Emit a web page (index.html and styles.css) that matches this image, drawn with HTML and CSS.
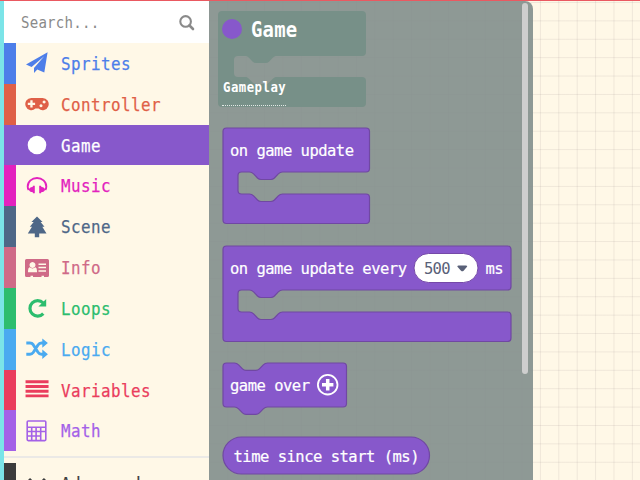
FILE: index.html
```
<!DOCTYPE html>
<html lang="en">
<head>
<meta charset="utf-8">
<title>Blocks editor</title>
<link rel="stylesheet" href="styles.css">
</head>
<body>
<div class="editor">
  <aside class="toolbox">
    <div class="search"><span class="label">Search...</span>
      <svg width="18" height="18" viewBox="0 0 18 18"><circle cx="7.6" cy="7.4" r="5.3" fill="none" stroke="#8a8a8a" stroke-width="2.1"/><path d="M11.5 11.5L15 15" stroke="#8a8a8a" stroke-width="2.6" stroke-linecap="round"/></svg>
    </div>
    <div class="row sprites"><svg viewBox="0 0 24 24"><path d="M22.6 1.200L1 13.600l5.600 2.500L19.200 5.200 9 17.100v4.800l3.300-3.400 7 3z"/></svg><span class="label">Sprites</span></div>
    <div class="row controller"><svg viewBox="0 0 24 24"><path fill-rule="evenodd" d="M6.300 5.900h11.300a6.100 6.100 0 1 1-4 10.700h-3.200A6.100 6.100 0 1 1 6.300 5.900zM5.300 8.300v2.500H2.800v2.300h2.500v2.500h2.300v-2.500h2.500v-2.300H7.600V8.300zM16 12.200a1.500 1.500 0 1 0 .01 0zM19.100 8.500a1.500 1.500 0 1 0 .01 0z"/></svg><span class="label">Controller</span></div>
    <div class="row game"><svg viewBox="0 0 24 24"><circle cx="12" cy="12" r="9.3"/></svg><span class="label">Game</span></div>
    <div class="row music"><svg viewBox="0 0 24 24"><path d="M3.700 16Q2.700 14.500 2.700 12.500C2.700 7.500 7 4 12 4s9.300 3.500 9.300 8.500q0 2-1 3.500" fill="none" stroke="currentColor" stroke-width="1.900"/><path d="M8 11.800h1.800v7.400H8l-.5-1.100C2.800 17.800 2.800 13.200 7.500 12.900zM16 11.800h-1.800v7.400H16l.5-1.100c4.700-.3 4.700-4.900 0-5.200z"/></svg><span class="label">Music</span></div>
    <div class="row scene"><svg viewBox="0 0 24 24"><path d="M12 1.500l5.600 5.600h-2l3.900 4.700h-2.200l4.200 6.700h-7.300v3.700h-4.400v-3.700H2.800l4.200-6.700H4.800l3.900-4.700H6.400z"/></svg><span class="label">Scene</span></div>
    <div class="row info"><svg viewBox="0 0 24 24"><path fill-rule="evenodd" d="M1.500 3h21q1.500 0 1.500 1.500v15q0 1.500-1.500 1.500h-3.500v-1.200h-2.500V21H8v-1.200H5.500V21h-4Q0 21 0 19.500v-15Q0 3 1.500 3zM7.500 6a3 3 0 1 0 .01 0zM4.500 11.300Q3 12 3 15v1.200h9V15q0-3-1.500-3.700-3 2.200-6 0zM13.500 7.400v1.500H21V7.400zM13.500 10.800v1.500H21v-1.500zM13.500 14.200v1.500H21v-1.500z"/></svg><span class="label">Info</span></div>
    <div class="row loops"><svg viewBox="0 0 24 24"><path d="M18.200 7A7.700 7.700 0 1 0 18.300 17.600" fill="none" stroke="currentColor" stroke-width="3.200"/><path d="M21.200 3v7.600h-7.800z"/></svg><span class="label">Loops</span></div>
    <div class="row logic"><svg viewBox="0 0 24 24"><path d="M1.300 6H5q2 0 3.200 1.700L13 15.200q1.300 2 3.500 2h2.500M1.300 17.200H5q2 0 3.200-1.700L13 8Q14.300 6 16.500 6h2.500" fill="none" stroke="currentColor" stroke-width="2.900"/><path d="M17.300 1.400L22.900 6l-5.600 4.700zM17.300 12.600l5.600 4.600-5.600 4.700z"/></svg><span class="label">Logic</span></div>
    <div class="row variables"><svg viewBox="0 0 24 24"><path d="M2 3.700h20.100M2 8.500h20.100M2 13.200h20.100M2 17.900h20.100" stroke="currentColor" stroke-width="2.900" stroke-linecap="square"/></svg><span class="label">Variables</span></div>
    <div class="row math"><svg viewBox="0 0 24 24"><g fill="none" stroke="currentColor" stroke-width="1.600"><rect x="2.200" y="2" width="18.600" height="19.600" rx="1"/><path d="M2 8.200h18.500M2 12.500h13.500M2 17h13.500M6.700 8v13.500M11.100 8v13.500M15.700 8v13.500M16 12.500h4"/></g></svg><span class="label">Math</span></div>
    <div class="divider"></div>
    <div class="row advanced"><svg viewBox="0 0 24 24"><path d="M4 8l8 8 8-8" fill="none" stroke="currentColor" stroke-width="3"/></svg><span class="label">Advanced</span></div>
  </aside>
  <main class="flyout">
    <svg class="ghost" width="148" height="97" viewBox="0 0 148 97"><path d="M4 0H144q4 0 4 4V41q0 4-4 4H59c-2 0-3 .6-4.200 1.800l-3.600 3.600q-1.500 1.500-3.600 1.500H38q-2 0-3.500-1.500l-3.600-3.600C29.700 45.600 29 45 27 45H20q-4 0-4 4V62q0 4 4 4h7c2 0 2.700.6 3.900 1.800l3.600 3.600q1.500 1.500 3.500 1.500h9.600q2.100 0 3.600-1.500l3.600-3.600C56 66.600 57 66 59 66h85q4 0 4 4V92q0 4-4 4H4q-4 0-4-4V4q0-4 4-4z"/></svg>
    <header class="title"><i class="dot"></i><span class="label">Game</span></header>
    <div class="group"><span class="label">Gameplay</span></div>
    <svg class="block update" width="149" height="98" viewBox="0 0 149 98"><path d="M4.500 1H144q3.500 0 3.500 3.500V41.500q0 3.500-3.500 3.500H60.500c-2 0-3 .6-4.200 1.800l-3.900 4.200q-1.500 1.500-3.600 1.500H39q-2 0-3.500-1.500l-3.900-4.200C30.400 45.600 29.500 45 27.500 45h-8q-3.500 0-3.500 3.500V63.500q0 3.500 3.500 3.500h8c2 0 2.900.6 4.100 1.800l3.900 4.200q1.500 1.500 3.500 1.500h9.800q2.100 0 3.600-1.500l3.900-4.200c1.200-1.200 2.200-1.800 4.200-1.800H144q3.500 0 3.500 3.500V93q0 3.500-3.500 3.500H4.500Q1 96.500 1 93V4.500Q1 1 4.500 1z"/><text x="8" y="29" textLength="124">on game update</text></svg>
    <svg class="block every" width="291" height="98" viewBox="0 0 291 98"><path d="M4.500 1H285.500q3.500 0 3.500 3.500V41.500q0 3.500-3.500 3.500H60.500c-2 0-3 .6-4.200 1.800l-3.900 4.200q-1.500 1.500-3.600 1.500H39q-2 0-3.500-1.500l-3.900-4.200C30.400 45.600 29.500 45 27.500 45h-8q-3.500 0-3.500 3.500V63.500q0 3.500 3.500 3.500h8c2 0 2.900.6 4.100 1.800l3.900 4.200q1.500 1.500 3.500 1.500h9.800q2.100 0 3.600-1.500l3.900-4.200c1.200-1.200 2.200-1.800 4.200-1.800H285.500q3.500 0 3.500 3.500V93q0 3.500-3.500 3.500H4.500Q1 96.500 1 93V4.500Q1 1 4.500 1z"/><text x="8" y="29" textLength="177">on game update every</text><rect x="192" y="8.500" width="64" height="29" rx="14.500" fill="#fff" stroke="#7549a8"/><text class="value" x="202" y="29" textLength="26.500">500</text><path class="arrow" d="M236.500 20.500h7.500q2 0 .8 1.500l-3.200 3.700q-1.300 1.300-2.600 0L235.700 22q-1.200-1.500.8-1.500z"/><text x="263.500" y="29" textLength="18">ms</text></svg>
    <svg class="block over" width="126" height="54" viewBox="0 0 126 54"><path d="M4.500 1H12.500c2 0 2.900.6 4.100 1.800l3.900 4q1.500 1.500 3.500 1.500h9.800q2.100 0 3.600-1.500l3.900-4C42.500 1.600 43.500 1 45.500 1h75.500q3.500 0 3.500 3.500V41.500q0 3.500-3.500 3.500H45.500c-2 0-3 .6-4.200 1.800l-3.900 4q-1.500 1.500-3.600 1.500H24q-2 0-3.500-1.500l-3.900-4C15.400 45.600 14.500 45 12.500 45H4.500Q1 45 1 41.500V4.500Q1 1 4.500 1z"/><text x="8" y="29" textLength="80">game over</text><circle cx="105.700" cy="22.700" r="9.800" fill="none" stroke="#fff" stroke-width="1.800"/><path class="plus" d="M105.700 17v11.400M100 22.700h11.400"/></svg>
    <svg class="block since" width="210" height="40" viewBox="0 0 210 40"><rect class="pill" x="1" y="1" width="206.500" height="37" rx="18.500"/><text x="11.500" y="25.500" textLength="186">time since start (ms)</text></svg>
    <i class="scrollbar"></i>
  </main>
  <section class="workspace"></section>
</div>
</body>
</html>
```
FILE: styles.css
```
* { box-sizing: border-box; }
body { margin: 0; overflow: hidden; }
.editor {
  display: flex;
  width: 640px;
  height: 480px;
  overflow: hidden;
  border-top: 1px solid #ea5961;
  background-color: #fff8e7;
  background-image:
    linear-gradient(90deg, rgba(100, 80, 90, .1) 1px, transparent 1px),
    linear-gradient(rgba(100, 80, 90, .1) 1px, transparent 1px);
  background-size: 18.4px 18.4px;
  background-position: 6.6px 1px;
  font-family: "DejaVu Sans Mono", monospace;
}
.toolbox {
  flex: 0 0 208.500px;
  border-left: 4px solid #7be4e8;
  background: #fff8e7;
}
.label {
  display: inline-block;
  transform: scaleX(.88);
  transform-origin: left center;
  white-space: pre;
}
.search {
  display: flex;
  align-items: center;
  justify-content: space-between;
  height: 42px;
  padding: 0 13px 0 17px;
  background: #fff;
  color: #8a8a8a;
  font-size: 16px;
  letter-spacing: .26px;
}
.search svg { margin: 2px 0 0 -10px; }
.row {
  display: flex;
  align-items: center;
  height: 40.840px;
  padding-left: 8.500px;
  border-left: 12px solid currentColor;
  font-size: 18px;
  letter-spacing: .530px;
  -webkit-text-stroke: .25px currentColor;
}
.row svg { width: 24px; height: 24px; margin-right: 12.500px; fill: currentColor; }
.sprites { color: #4d7ee9; }
.controller { color: #df6047; }
.row.game { color: #fff; background: #8758cb; border-left-color: #8758cb; }
.music { color: #e322be; }
.scene { color: #4e6787; }
.info { color: #cf6a87; }
.loops { color: #2dbd6e; }
.logic { color: #4aaaf0; }
.variables { color: #ea3d5d; }
.math { color: #a461e7; }
.advanced { color: #3c3c3c; }
.divider { height: 11.500px; padding-top: 5px; }
.divider::before { content: ""; display: block; height: 2px; background: #ebe9e6; }
.flyout {
  position: relative;
  display: flex;
  flex-direction: column;
  flex: 0 0 324.500px;
  padding: 10px 0 0 13.500px;
  overflow: hidden;
  border-radius: 0 8px 0 0;
  background: rgba(131, 143, 141, .91);
}
.flyout > * { flex-shrink: 0; }
.ghost { position: absolute; left: 9.500px; top: 10px; fill: #779088; }
.title {
  position: relative;
  display: flex;
  align-items: center;
  gap: 8.500px;
  height: 36px;
  color: #fff;
  font-size: 21.500px;
  font-weight: bold;
  letter-spacing: .2px;
}
.dot { width: 20px; height: 20px; border-radius: 50%; background: #8758cb; }
.group {
  position: relative;
  width: 64px;
  height: 59px;
  padding: 32px 0 0 .5px;
  border-bottom: 1px dotted #e3e8e6;
  color: #fff;
  font-size: 14px;
  font-weight: bold;
  letter-spacing: .55px;
}
.block { fill: #8758cb; overflow: visible; }
.block > path:first-child, .pill { stroke: #7048a2; stroke-width: 1.200px; }
.block text { fill: #fff; font-size: 15.500px; stroke: #fff; stroke-width: .2px; }
.block .value, .block .arrow { fill: #596078; stroke: none; }
.block .plus { fill: none; stroke: #fff; stroke-width: 3.500px; }
.update { margin-top: 21px; }
.every { margin-top: 20px; }
.over { margin-top: 19px; }
.since { margin-top: 19.500px; }
.scrollbar {
  position: absolute;
  right: 5px;
  top: 2px;
  width: 6px;
  height: 371px;
  border-radius: 3px;
  background: #cecece;
}
.workspace { flex: 1; }
```
